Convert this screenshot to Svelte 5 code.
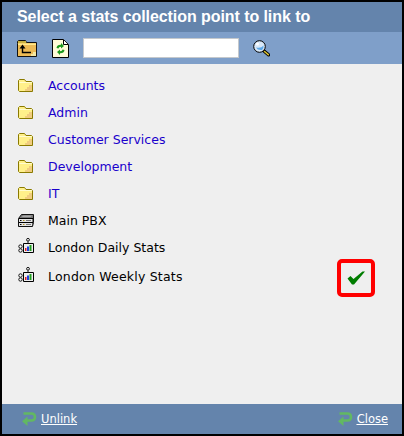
<script>
  const items = [
    { name: 'Accounts', kind: 'folder' },
    { name: 'Admin', kind: 'folder' },
    { name: 'Customer Services', kind: 'folder' },
    { name: 'Development', kind: 'folder' },
    { name: 'IT', kind: 'folder' },
    { name: 'Main PBX', kind: 'pbx' },
    { name: 'London Daily Stats', kind: 'stats' },
    { name: 'London Weekly Stats', kind: 'stats', selected: true }
  ];
</script>

{#snippet back()}
  <svg class="back" width="15" height="16" viewBox="0 0 15 16">
    <path d="M1.500 2.500H9.500Q13 2.500 13 6Q13 9.500 9.500 9.500H4.500" fill="none" stroke="#62b862" stroke-width="2.600"/>
    <path d="M5.500 5.500V15L0 10.200Z" fill="#62b862"/>
  </svg>
{/snippet}

<div class="dialog">
  <header class="title">Select a stats collection point to link to</header>
  <div class="toolbar">
    <svg class="up" width="20" height="17" viewBox="0 0 20 17">
      <path d="M.5 3.500V1.500L1.500.5H8.500L9.500 2.500H19.500V16.500H.5Z" fill="#eebb55" stroke="#111"/>
      <path d="M1 1H9V3H1Z" fill="#c8b040"/>
      <path d="M1 3.500H19V5H1Z" fill="#ffe98c"/>
      <path d="M14 16V14H16V12H19V16Z" fill="#f7e8a0"/>
      <path d="M5.500 7V12.500H14" fill="none" stroke="#000" stroke-width="1.400"/>
      <path d="M5.500 4.500L8.500 8.500H2.500Z" fill="#000"/>
    </svg>
    <svg class="refresh" width="17" height="19" viewBox="0 0 17 19">
      <path d="M.5.500H11.500L16.500 5.500V18.500H.5Z" fill="#fffcd8" stroke="#000"/>
      <path d="M11.500 1V5.500H16" fill="#fff" stroke="#000"/>
      <path d="M4.500 9Q5 5.500 9 5.700V4L12 7L9 9.500V7.700Q6.500 7.700 6.500 9.500Z" fill="#1e9a1e"/>
      <path d="M12.500 11Q12 14.500 8 14.300V16L5 13L8 10.500V12.300Q10.500 12.300 10.500 10.500Z" fill="#1e9a1e"/>
    </svg>
    <input class="search" type="text" />
    <svg class="magnifier" width="17" height="17" viewBox="0 0 17 17">
      <path d="M11 11L15.500 14.800" stroke="#000" stroke-width="3.400" stroke-linecap="round"/>
      <path d="M11.500 11.500L15.300 14.700" stroke="#d8c030" stroke-width="1.600" stroke-linecap="round"/>
      <circle cx="6.500" cy="6.500" r="5.800" fill="#d8e8f8" stroke="#000"/>
      <path d="M3 7.500Q4.500 10.500 9 10Q11 8.500 10.500 5.500Q8.500 8.500 3 7.500Z" fill="#5ca8e8"/>
      <circle cx="4.500" cy="4" r="1.500" fill="#fff"/>
    </svg>
  </div>
  <ul class="list">
    {#each items as item}
      <li class:selected={item.selected}>
        <span class="icon {item.kind}">
          {#if item.kind === 'folder'}
            <svg width="15" height="13" viewBox="0 0 15 13">
              <path d="M.5 11.500V1.500L1.500.5H6.500L8 2.500H13.500L14.500 3.500V12.500H1.500Z" fill="#fff08a" stroke="#8a7a00"/>
              <path d="M1.200 3.500H13.800" stroke="#fffcd0"/>
              <path d="M7 12V10H9V8H11V6H14V12Z" fill="#f0cc80"/>
            </svg>
          {:else if item.kind === 'pbx'}
            <svg width="16" height="13" viewBox="0 0 16 13">
              <path d="M.5 4.500L3.500.5H15.500V8.500L14.500 12.500H.5Z" fill="#777" stroke="#111"/>
              <path d="M3.500 3L5.500 1.500H14L12.500 3Z" fill="#aaa"/>
              <path d="M1 5H14V8H1ZM1 9H14V12H1Z" fill="#e4e4e4"/>
              <path d="M1 4.500H15M1 8.500H15" stroke="#000"/>
              <path d="M2 6.500H3.500M2 10.500H3.500" stroke="#000"/>
              <path d="M5 6.500H6.500M5 10.500H6.500" stroke="#b09020"/>
              <path d="M8 6.500H13M8 10.500H13" stroke="#777"/>
            </svg>
          {:else}
            <svg width="16" height="15" viewBox="0 0 16 15">
              <circle cx="2.500" cy="8.500" r="1.700" fill="#fff" stroke="#111"/>
              <circle cx="2.500" cy="12.500" r="1.700" fill="#fff" stroke="#111"/>
              <circle cx="10" cy="1.800" r="1.400" fill="#fff" stroke="#111"/>
              <path d="M10 3.500V5" stroke="#111"/>
              <path d="M5.500 5.500H15.500V14.500H5.500Z" fill="#eee" stroke="#000"/>
              <path d="M7 10H8.500V13H7Z" fill="#e02020"/>
              <path d="M9 8.500H11V13H9Z" fill="#2040e0"/>
              <path d="M11.500 7H13.500V13H11.500Z" fill="#20a020"/>
            </svg>
          {/if}
        </span>
        <span class="name" class:link={item.kind === 'folder'}>{item.name}</span>
        {#if item.selected}
          <span class="check">
            <svg width="18" height="14" viewBox="0 0 18 14">
              <path d="M.5 7.500L3.500 5L6.500 8L15.500 .5H18L7 13.500H5Z" fill="#007d00"/>
            </svg>
          </span>
        {/if}
      </li>
    {/each}
  </ul>
  <footer class="footer">
    <a href="#unlink">{@render back()}<span>Unlink</span></a>
    <a href="#close">{@render back()}<span>Close</span></a>
  </footer>
</div>

<style>
  :global(body) {
    margin: 0;
    background: #000;
  }
  .dialog {
    box-sizing: border-box;
    width: 404px;
    height: 436px;
    border: 2px solid #000;
    display: flex;
    flex-direction: column;
    background: #efefef;
    font-family: "DejaVu Sans", Verdana, sans-serif;
    font-size: 12.5px;
  }
  .title {
    height: 30px;
    flex: none;
    box-sizing: border-box;
    padding-left: 15px;
    background: #6484ac;
    color: #fff;
    font: bold 16px/30px "Liberation Sans", Arial, sans-serif;
    letter-spacing: -0.07px;
  }
  .toolbar {
    height: 32px;
    flex: none;
    display: flex;
    align-items: center;
    padding-left: 15px;
    background: #7f9fc9;
  }
  .up {
    margin-right: 15px;
  }
  .refresh {
    margin-right: 14px;
  }
  .search {
    box-sizing: border-box;
    width: 156px;
    height: 20px;
    margin: 0 14px 0 0;
    padding: 0;
    background: #fff;
    border: 1px solid #c4c8cc;
  }
  .list {
    flex: 1;
    margin: 0;
    padding: 8px 0 0 16px;
    list-style: none;
  }
  li {
    display: flex;
    align-items: center;
    height: 27px;
    color: #000;
  }
  li.selected {
    height: 31px;
  }
  .icon {
    width: 30px;
    display: flex;
    align-items: center;
  }
  .icon.stats {
    margin-bottom: 4px;
  }
  .selected .name {
    letter-spacing: 0.2px;
  }
  .link {
    color: #1a00cc;
  }
  .check {
    box-sizing: border-box;
    width: 38px;
    height: 38px;
    margin-top: 3px;
    margin-left: auto;
    margin-right: 27px;
    display: flex;
    flex: none;
    align-items: center;
    justify-content: center;
    border: 4px solid #f00;
    border-radius: 5px;
  }
  .footer {
    height: 30px;
    flex: none;
    display: flex;
    align-items: center;
    justify-content: space-between;
    padding: 0 14px 0 20px;
    background: #6484ac;
    font-size: 11.5px;
  }
  .footer a {
    display: flex;
    align-items: center;
    gap: 4px;
    color: #fff;
  }
  .footer span {
    text-decoration: underline;
  }
</style>
